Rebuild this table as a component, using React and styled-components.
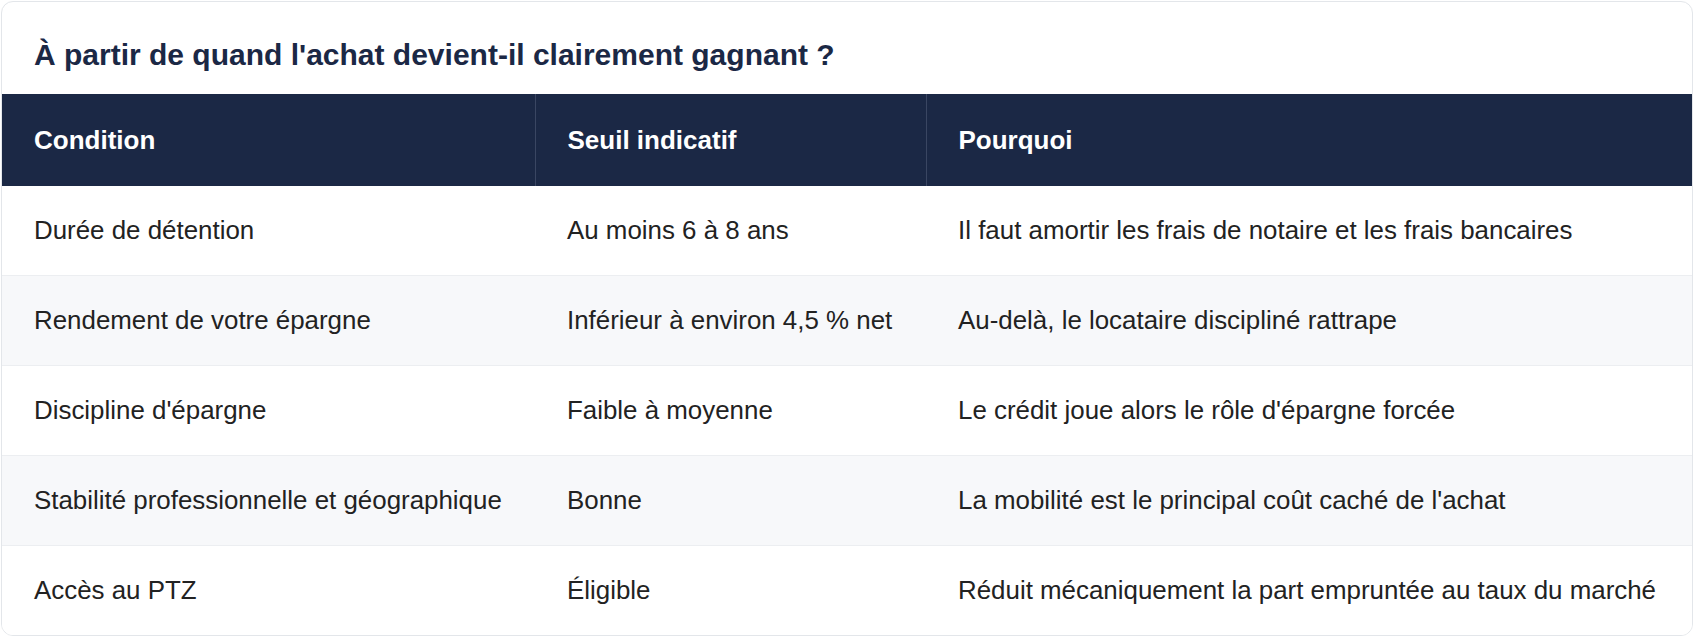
import styled, { createGlobalStyle } from 'styled-components'

const GlobalStyle = createGlobalStyle`
  body {
    margin: 0;
    background: #ffffff;
    font-family: "Liberation Sans", Arial, Helvetica, sans-serif;
  }
  * { box-sizing: border-box; }
`

const Page = styled.div`
  padding: 1px;
`

const Card = styled.section`
  border: 1px solid #e3e6ea;
  border-radius: 12px;
  overflow: hidden;
  background: #ffffff;
`

const Title = styled.h2`
  margin: 0;
  padding: 35px 32px 22px;
  font-size: 30px;
  line-height: 35px;
  font-weight: 700;
  color: #1b2845;
`

const Table = styled.table`
  width: 100%;
  border-collapse: collapse;
  table-layout: fixed;
`

const HeadCell = styled.th`
  background: #1b2845;
  color: #ffffff;
  text-align: left;
  font-size: 26px;
  line-height: 32px;
  font-weight: 700;
  padding: 30px 32px;
  border-left: ${p => (p.$first ? 'none' : '1px solid #3a4662')};
`

const Row = styled.tr`
  background: ${p => (p.$alt ? '#f7f8fa' : '#ffffff')};
  border-bottom: ${p => (p.$last ? 'none' : '1px solid #eceef1')};
`

const Cell = styled.td`
  font-size: 25.9px;
  line-height: 31px;
  color: #222222;
  padding: 29px 32px;
  white-space: nowrap;
`

const rows = [
  ['Durée de détention', 'Au moins 6 à 8 ans', 'Il faut amortir les frais de notaire et les frais bancaires'],
  ['Rendement de votre épargne', 'Inférieur à environ 4,5 % net', 'Au-delà, le locataire discipliné rattrape'],
  ["Discipline d'épargne", 'Faible à moyenne', "Le crédit joue alors le rôle d'épargne forcée"],
  ['Stabilité professionnelle et géographique', 'Bonne', "La mobilité est le principal coût caché de l'achat"],
  ['Accès au PTZ', 'Éligible', 'Réduit mécaniquement la part empruntée au taux du marché'],
]

export default function App() {
  return (
    <>
      <GlobalStyle />
      <Page>
        <Card>
          <Title>À partir de quand l'achat devient-il clairement gagnant ?</Title>
          <Table>
            <colgroup>
              <col style={{ width: 533 }} />
              <col style={{ width: 391 }} />
              <col />
            </colgroup>
            <thead>
              <tr>
                <HeadCell $first>Condition</HeadCell>
                <HeadCell>Seuil indicatif</HeadCell>
                <HeadCell>Pourquoi</HeadCell>
              </tr>
            </thead>
            <tbody>
              {rows.map((r, i) => (
                <Row key={i} $alt={i % 2 === 1} $last={i === rows.length - 1}>
                  {r.map((c, j) => (
                    <Cell key={j}>{c}</Cell>
                  ))}
                </Row>
              ))}
            </tbody>
          </Table>
        </Card>
      </Page>
    </>
  )
}
